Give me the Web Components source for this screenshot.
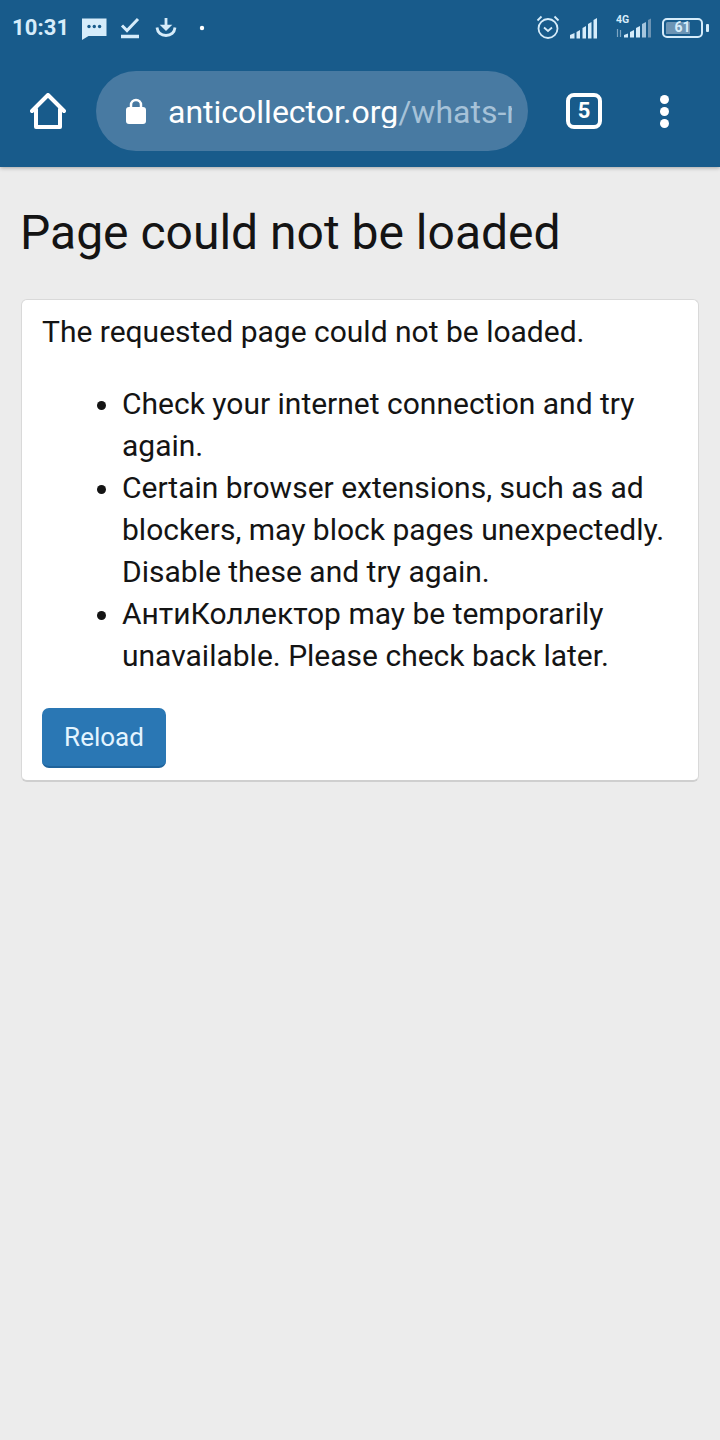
<!DOCTYPE html>
<html>
<head>
<meta charset="utf-8">
<title>Page could not be loaded</title>
<style>
  html, body { margin: 0; padding: 0; }
  body { width: 720px; height: 1440px; background: #ececec; font-family: Roboto, sans-serif; overflow: hidden; }
</style>
</head>
<body>
<phone-status></phone-status>
<browser-bar url-host="anticollector.org" url-path="/whats-new/" tabs="5"></browser-bar>
<error-page heading="Page could not be loaded">
  <p>The requested page could not be loaded.</p>
  <ul>
    <li>Check your internet connection and try again.</li>
    <li>Certain browser extensions, such as ad blockers, may block pages unexpectedly. Disable these and try again.</li>
    <li>АнтиКоллектор may be temporarily unavailable. Please check back later.</li>
  </ul>
  <reload-button>Reload</reload-button>
</error-page>

<script>
class PhoneStatus extends HTMLElement {
  constructor() {
    super();
    this.attachShadow({ mode: "open" });
  }

  connectedCallback() {
    const c = "#d6ecfa";
    this.shadowRoot.innerHTML = `
      <style>
        :host {
          display: flex;
          align-items: center;
          height: 56px;
          background: #185b8b;
          color: ${c};
          padding: 0 11px 0 12px;
          box-sizing: border-box;
        }
        .time { font: 700 22px/1 Roboto, sans-serif; width: 57px; margin-right: 12px; letter-spacing: .1px; }
        .left { display: flex; align-items: center; }
        .right { display: flex; align-items: center; margin-left: auto; }
        svg { display: block; }
        .battery {
          box-sizing: border-box;
          width: 41px;
          height: 20px;
          border: 2.500px solid ${c};
          border-radius: 5px;
          margin: -1px 0 0 10px;
          font: 700 14px/13px Roboto, sans-serif;
          text-align: center;
          padding: 1.500px;
          background: linear-gradient(90deg, #6c94b4 0 72%, transparent 72%) content-box;
        }
        .cap { width: 3px; height: 8px; background: ${c}; border-radius: 1px; margin: -1px 0 0 3px; }
      </style>
      <span class="time">10:31</span>
      <div class="left">
        <svg width="26" height="24" viewBox="0 0 26 24" fill="${c}" style="margin-right:13px">
          <path d="M1 2.500h24.500v17.500H7.500L1 24z"/>
          <circle cx="8" cy="10.500" r="1.700" fill="#185b8b"/><circle cx="13.300" cy="10.500" r="1.700" fill="#185b8b"/><circle cx="18.600" cy="10.500" r="1.700" fill="#185b8b"/>
        </svg>
        <svg width="20" height="24" viewBox="0 0 20 24" fill="none" stroke="${c}" stroke-width="3" style="margin-right:15px">
          <path d="M2 9.500l5 5L18 3"/><path d="M1 20.500h18" stroke-width="3.500"/>
        </svg>
        <svg width="22" height="22" viewBox="0 0 22 22" fill="none" stroke="${c}" stroke-width="2.800" style="margin-right:22px">
          <path d="M2 10.500c.500 5 4 8 9 8s8.500-3 9-8"/><path d="M11 1v10"/><path d="M6.500 8.500L11 13l4.500-4.500z" fill="${c}" stroke-width="1.500"/>
        </svg>
        <svg width="6" height="6" viewBox="0 0 6 6"><circle cx="3" cy="3" r="2.200" fill="#fff"/></svg>
      </div>
      <div class="right">
        <svg width="24" height="24" viewBox="0 0 24 24" fill="none" stroke="${c}" stroke-width="1.800" style="margin:-2px 10px 0 0">
          <circle cx="12" cy="13.500" r="9.500"/><path d="M8 12.500l4 3.500 4-3.500"/><path d="M1.500 5.500L5.500 1.500M18.500 1.500l4 4"/>
        </svg>
        <svg width="29" height="21" viewBox="0 0 29 21" fill="${c}" style="margin-right:17px">
          <path d="M0 17l4.500-2v5.500H0zM6.500 14l3.500-2v8.500H6.500zM12.500 10l3.500-2v12.500h-3.500zM18 6l3.500-2v16.500H18zM23.500 2l3.500-2v20.500h-3.500z"/>
        </svg>
        <svg width="36" height="30" viewBox="0 -3 36 30" style="margin-top:-3px">
          <text x="0" y="8" font-family="Roboto" font-weight="700" font-size="10.500" fill="${c}">4G</text>
          <path d="M1.500 14v8M4.500 15v7" stroke="#7da6c4" stroke-width="1.200"/>
          <path d="M8 20l4-1.500v4H8zM14 17l4-2v7.500h-4zM20 13l4-2v11.500h-4z" fill="${c}"/>
          <path d="M26 9l4-2v15.500h-4z" fill="#a5c6de"/><path d="M32 5l3-1.500v19h-3z" fill="#6c94b4"/>
        </svg>
        <div class="battery">61</div>
        <div class="cap"></div>
      </div>
    `;
  }
}

class BrowserBar extends HTMLElement {
  constructor() {
    super();
    this.attachShadow({ mode: "open" });
  }

  connectedCallback() {
    const host = this.getAttribute("url-host");
    const path = this.getAttribute("url-path");
    const tabs = this.getAttribute("tabs");
    this.shadowRoot.innerHTML = `
      <style>
        :host {
          display: flex;
          align-items: flex-start;
          height: 111px;
          background: #185b8b;
          box-shadow: 0 1px 4px rgba(0,0,0,.3);
          clip-path: inset(0 0 -10px 0);
          box-sizing: border-box;
          padding-top: 15px;
          position: relative;
        }
        .home { width: 96px; height: 80px; display: flex; align-items: center; justify-content: center; }
        .url {
          width: 432px;
          height: 80px;
          border-radius: 40px;
          background: #487aa2;
          display: flex;
          align-items: center;
          box-sizing: border-box;
          padding: 0 16px 0 30px;
          color: #fff;
          font: 400 32px/1 Roboto, sans-serif;
          overflow: hidden;
        }
        .url svg { flex: none; margin-right: 22px; }
        .text { white-space: nowrap; overflow: hidden; padding-top: 2px; }
        .text span { color: #a6c2d8; }
        .tabs {
          box-sizing: border-box;
          width: 36px;
          height: 36px;
          border: 4px solid #fff;
          border-radius: 8px;
          margin: 22px 0 0 38px;
          color: #fff;
          font: 700 22px/28px Roboto, sans-serif;
          text-align: center;
        }
        .menu { margin: 24px 0 0 54px; width: 16px; display: flex; flex-direction: column; align-items: center; gap: 3px; }
        .menu i { width: 9px; height: 9px; border-radius: 50%; background: #fff; display: block; }
      </style>
      <div class="home">
        <svg width="36" height="36" viewBox="0 0 36 36" fill="none" stroke="#fff" stroke-width="4" stroke-linejoin="round" stroke-linecap="round">
          <path d="M2 18L18 2l16 16M6 16v18h24V16"/>
        </svg>
      </div>
      <div class="url">
        <svg width="20" height="26" viewBox="0 0 20 26">
          <path d="M5 11V7a5 5 0 0 1 10 0v4" fill="none" stroke="#fff" stroke-width="2.500"/>
          <rect y="9" width="20" height="17" rx="3" fill="#fff"/>
        </svg>
        <div class="text">${host}<span>${path}</span></div>
      </div>
      <div class="tabs">${tabs}</div>
      <div class="menu"><i></i><i></i><i></i></div>
    `;
  }
}

class ErrorPage extends HTMLElement {
  constructor() {
    super();
    this.attachShadow({ mode: "open" });
  }

  connectedCallback() {
    const heading = this.getAttribute("heading");
    this.shadowRoot.innerHTML = `
      <style>
        :host { display: block; padding: 0 21px; color: #141414; font-family: Roboto, sans-serif; }
        h1 { margin: 0 0 0 -1px; padding-top: 38px; font: 400 48px/56px Roboto, sans-serif; height: 94px; }
        .panel {
          box-sizing: border-box;
          background: #fff;
          border: 1px solid #d9d9d9;
          border-bottom: 2px solid #cfcfcf;
          border-radius: 6px;
          padding: 11px 20px 12px;
          font-size: 30px;
          line-height: 42px;
        }
        ::slotted(p) { margin: 0 0 30px; }
        ::slotted(ul) { margin: 0 0 31px; padding: 0 0 0 80px; }
      </style>
      <h1>${heading}</h1>
      <div class="panel"><slot></slot></div>
    `;
  }
}

class ReloadButton extends HTMLElement {
  constructor() {
    super();
    this.attachShadow({ mode: "open" });
  }

  connectedCallback() {
    this.shadowRoot.innerHTML = `
      <style>
        :host {
          display: block;
          width: 124px;
          height: 60px;
          box-sizing: border-box;
          background: #2a77b4;
          border-bottom: 2px solid #1f639b;
          border-radius: 7px;
          color: #e3f4ff;
          font: 400 26px/58px Roboto, sans-serif;
          text-align: center;
        }
      </style>
      <slot></slot>
    `;
  }
}

customElements.define("phone-status", PhoneStatus);
customElements.define("browser-bar", BrowserBar);
customElements.define("error-page", ErrorPage);
customElements.define("reload-button", ReloadButton);
</script>
</body>
</html>
